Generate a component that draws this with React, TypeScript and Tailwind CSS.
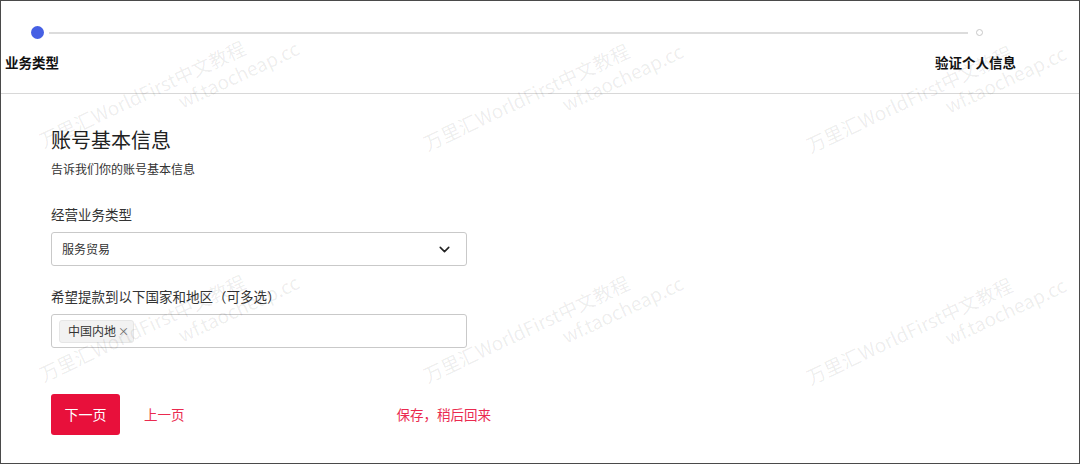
import React from "react";
import { ChevronDown } from "lucide-react";

const font = { fontFamily: '"Noto Sans CJK SC", "Noto Sans", sans-serif' };

const anchors: [number, number][] = [
  [44, 150],
  [428, 153],
  [811, 155],
  [44, 384],
  [428, 385],
  [811, 387],
];

function Watermark({ x, y }: { x: number; y: number }) {
  return (
    <div
      className="absolute w-0 h-0"
      style={{ left: x, top: y, transform: "rotate(-25deg)", transformOrigin: "0 0" }}
    >
      <div className="absolute left-0 bottom-0 whitespace-nowrap text-[19px] leading-[22px] text-black/[0.08]">
        万里汇WorldFirst中文教程
      </div>
      <div className="absolute left-[142px] top-[1px] whitespace-nowrap text-[19px] leading-[22px] text-black/[0.08]">
        wf.taocheap.cc
      </div>
    </div>
  );
}

export default function App() {
  return (
    <div
      className="relative w-[1080px] h-[464px] overflow-hidden bg-white border border-[#4a4a4a] text-[#333]"
      style={font}
    >
      {/* Stepper header */}
      <div className="h-[93px] border-b border-[#d8d8d8]">
        <div className="flex items-center pl-[30px] pr-[96px] pt-[25px]">
          <div className="w-[13px] h-[13px] rounded-full bg-[#4660e4] shrink-0" />
          <div className="flex-1 h-[2px] bg-[#dcdcdc] ml-[5px] mr-[8px]" />
          <div className="w-[7px] h-[7px] rounded-full border border-[#c8c8c8] shrink-0" />
        </div>
        <div className="flex justify-between pl-[4px] pr-[63px] mt-[13px] text-[13.5px] leading-[20px] font-bold text-[#111]">
          <span>业务类型</span>
          <span>验证个人信息</span>
        </div>
      </div>

      {/* Form */}
      <div className="pl-[50px] pt-[32px]">
        <div className="text-[20px] leading-[28px] text-[#222]">账号基本信息</div>
        <div className="mt-[6px] text-[12px] leading-[18px] text-[#333]">告诉我们你的账号基本信息</div>

        <div className="mt-[26px] text-[13.5px] leading-[20px] text-[#333]">经营业务类型</div>
        <div className="mt-[8px] w-[416px] h-[34px] flex items-center justify-between border border-[#c9c9c9] rounded-[3px] pl-[10px] pr-[13px]">
          <span className="text-[12px] text-[#333]">服务贸易</span>
          <ChevronDown size={17} strokeWidth={2.2} className="text-[#222]" />
        </div>

        <div className="mt-[20px] text-[13.5px] leading-[20px] text-[#333]">
          希望提款到以下国家和地区（可多选<span className="[font-feature-settings:'halt']">）</span>
        </div>
        <div className="mt-[8px] w-[416px] h-[34px] flex items-center border border-[#c9c9c9] rounded-[3px] pl-[7px]">
          <div className="flex items-center h-[23px] pl-[8px] pr-[4px] rounded-[3px] bg-[#f2f2f2] border border-[#e6e6e6] text-[12px] text-[#333]">
            中国内地
            <span className="ml-[2px] text-[11px] text-[#666]">×</span>
          </div>
        </div>

        <div className="mt-[46px] flex items-center">
          <button className="w-[69px] h-[41px] rounded-[3px] bg-[#e8103b] text-white text-[14px]">下一页</button>
          <span className="ml-[24px] text-[13.5px] text-[#ea2a4f]">上一页</span>
          <span className="ml-[212px] text-[13.5px] text-[#ea2a4f]">保存，稍后回来</span>
        </div>
      </div>

      {/* Watermark overlay */}
      <div className="pointer-events-none absolute inset-0">
        {anchors.map(([x, y], i) => (
          <Watermark key={i} x={x} y={y} />
        ))}
      </div>
    </div>
  );
}
